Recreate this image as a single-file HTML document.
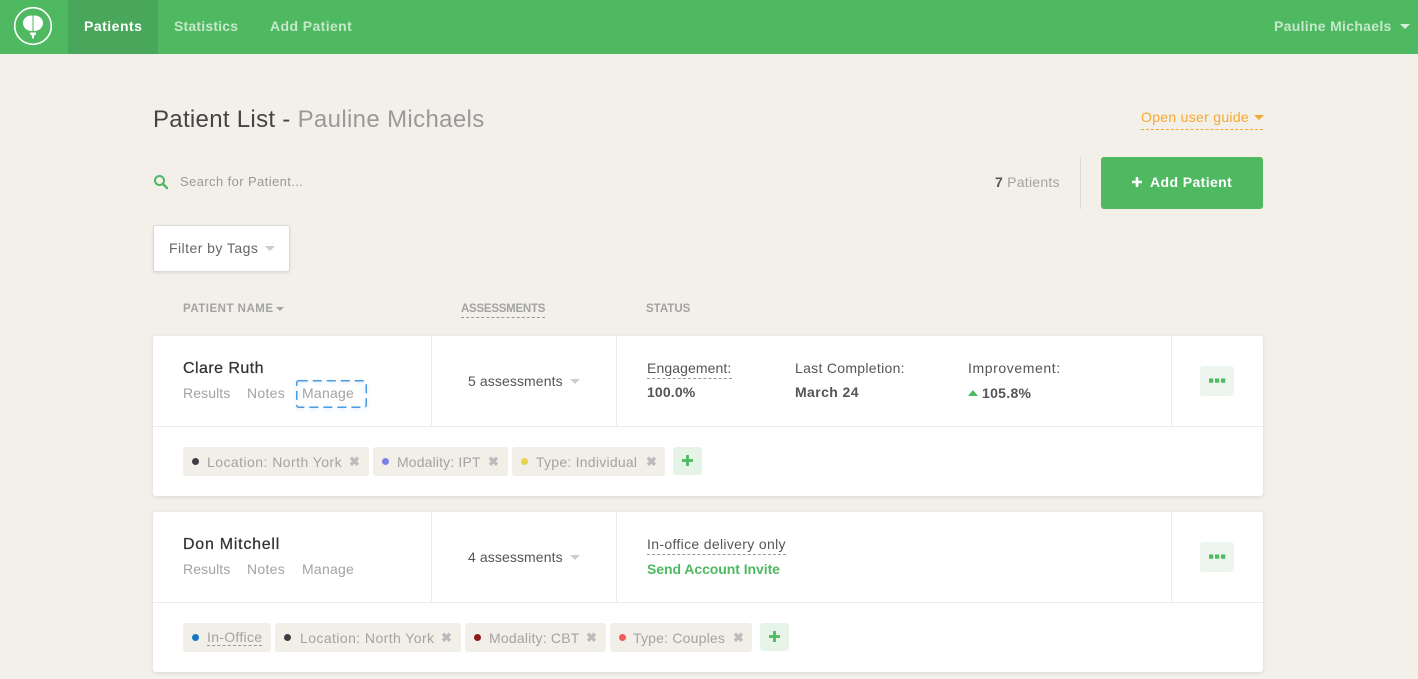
<!DOCTYPE html>
<html><head><meta charset="utf-8"><title>Patient List</title>
<style>
*{box-sizing:border-box}
html,body{margin:0;padding:0;width:1418px;height:679px;overflow:hidden;background:#f3f0ea;font-family:"Liberation Sans",sans-serif;color:#444}
.a{position:absolute}
.t{position:absolute;white-space:nowrap;line-height:20px;font-size:14px}
.b{font-weight:700}
.nav{left:0;top:0;width:1418px;height:54px;background:#4eb961}
.card{left:153px;width:1110px;height:160px;background:#fff;border-radius:3px;box-shadow:0 1px 4px rgba(0,0,0,.1)}
.h{height:1px;background:#eceae6}
.v{width:1px;background:#eceae6}
.g{color:#a3a3a3}
.tag{position:absolute;height:29px;background:#f2efe9;border-radius:3px}
.plus{position:absolute;width:29px;height:28px;background:#e6f4e8;border-radius:3px}
.dot{position:absolute;width:7px;height:7px;border-radius:50%}
.more{position:absolute;width:34px;height:30px;left:1200px;background:#edf6ee;border-radius:3px}
.tri{position:absolute;width:0;height:0;border-left:5px solid transparent;border-right:5px solid transparent;border-top:5px solid #ccc}
.dash{position:absolute;height:0;border-top:1px dashed #999}
.name{-webkit-text-stroke:.25px #333}
svg{position:absolute;overflow:visible}
</style></head><body>
<div class="a nav"></div>
<div class="a" style="left:68px;top:0;width:90px;height:54px;background:#48a75a"></div>
<svg style="left:0;top:0" width="70" height="54">
<circle cx="33" cy="26" r="18.3" fill="none" stroke="#fff" stroke-width="1.6"/>
<path d="M32.500 15.500C27 15 23 18.500 23 23C23 27.500 27 31.500 32.500 31ZM33.500 15.500C39 15 43 18.500 43 23C43 27.500 39 31.500 33.500 31Z" fill="#fff"/>
<path d="M30 32.500h6v1.500l-2 2v2.500h-2v-2.500l-2-2z" fill="#fff"/>
</svg>
<div class="t b" style="left:84px;top:16px;color:#fff;letter-spacing:.5px">Patients</div>
<div class="t b" style="left:174px;top:16px;color:#c5e8cb;letter-spacing:.2px">Statistics</div>
<div class="t b" style="left:270px;top:16px;color:#c5e8cb;letter-spacing:.4px">Add Patient</div>
<div class="t b" style="left:1274px;top:16px;color:#c5e8cb;letter-spacing:.3px">Pauline Michaels</div>
<div class="tri" style="left:1400px;top:24px;border-top-color:#d5eeda"></div>

<div class="t" style="left:153px;top:105px;line-height:30px;font-size:24px;color:#444;letter-spacing:.3px">Patient List - <span style="color:#999;letter-spacing:.35px">Pauline Michaels</span></div>
<div class="t" style="left:1141px;top:107px;color:#f5a833;letter-spacing:.3px">Open user guide</div>
<div class="tri" style="left:1254px;top:115px;border-top-color:#f5a833"></div>
<div class="dash" style="left:1141px;top:129px;width:122px;border-top-color:#f5a833"></div>

<svg style="left:154px;top:175px" width="15" height="14"><circle cx="5.500" cy="5.500" r="4.500" fill="none" stroke="#4eb961" stroke-width="2"/><path d="M9 9l4 4" stroke="#4eb961" stroke-width="2.400" stroke-linecap="round"/></svg>
<div class="t" style="left:180px;top:172px;font-size:13px;color:#999;letter-spacing:.4px">Search for Patient...</div>
<div class="t" style="left:995px;top:172px;color:#a3a3a3;letter-spacing:.25px"><span class="b" style="color:#555">7</span> Patients</div>
<div class="a v" style="left:1080px;top:157px;height:52px;background:#dddad4"></div>
<div class="a" style="left:1101px;top:157px;width:162px;height:52px;background:#4eb961;border-radius:3px"></div>
<svg style="left:1131px;top:176px" width="12" height="12"><path d="M6 1v10M1 6h10" stroke="#fff" stroke-width="2.600"/></svg>
<div class="t b" style="left:1150px;top:172px;color:#fff;letter-spacing:.4px">Add Patient</div>

<div class="a" style="left:153px;top:225px;width:137px;height:47px;background:#fff;border:1px solid #dcdad6;border-radius:3px;box-shadow:0 1px 3px rgba(0,0,0,.1)"></div>
<div class="t" style="left:169px;top:238px;color:#666;letter-spacing:.45px">Filter by Tags</div>
<div class="tri" style="left:265px;top:246px"></div>

<div class="t b" style="left:183px;top:299px;font-size:11.500px;color:#a3a3a3;letter-spacing:.5px">PATIENT NAME</div>
<div class="tri" style="left:276px;top:307px;border-left-width:4px;border-right-width:4px;border-top:4px solid #a3a3a3"></div>
<div class="t b" style="left:461px;top:299px;font-size:11.500px;color:#a3a3a3;letter-spacing:-.25px">ASSESSMENTS</div>
<div class="dash" style="left:461px;top:317px;width:84px"></div>
<div class="t b" style="left:646px;top:299px;font-size:11.500px;color:#a3a3a3;letter-spacing:0">STATUS</div>

<div class="a card" style="top:336px"></div>
<div class="a h" style="left:153px;top:426px;width:1110px"></div>
<div class="a v" style="left:431px;top:336px;height:90px"></div>
<div class="a v" style="left:616px;top:336px;height:90px"></div>
<div class="a v" style="left:1171px;top:336px;height:90px"></div>
<div class="t name" style="left:183px;top:359px;font-size:16px;color:#333;letter-spacing:.45px">Clare Ruth</div>
<div class="t g" style="left:183px;top:383px;letter-spacing:.1px">Results</div>
<div class="t g" style="left:247px;top:383px;letter-spacing:.3px">Notes</div>
<div class="t g" style="left:302px;top:383px;letter-spacing:.25px">Manage</div>
<svg style="left:296px;top:380px;filter:drop-shadow(0 1px 2px rgba(74,155,224,.35))" width="71" height="28"><rect x=".75" y=".75" width="69.500" height="26.500" rx="2" fill="none" stroke="#4a9be0" stroke-width="1.500" stroke-dasharray="9 5"/></svg>
<div class="t" style="left:468px;top:371px;color:#555;letter-spacing:.1px">5 assessments</div>
<div class="tri" style="left:570px;top:379px"></div>
<div class="t" style="left:647px;top:358px;color:#555;letter-spacing:.1px">Engagement:</div>
<div class="dash" style="left:647px;top:378px;width:85px"></div>
<div class="t b" style="left:647px;top:382px;color:#555;letter-spacing:.15px">100.0%</div>
<div class="t" style="left:795px;top:358px;color:#555;letter-spacing:.3px">Last Completion:</div>
<div class="t b" style="left:795px;top:382px;color:#555;letter-spacing:.4px">March 24</div>
<div class="t" style="left:968px;top:358px;color:#555;letter-spacing:.6px">Improvement:</div>
<div class="tri" style="left:968px;top:390px;border-top:0;border-bottom:6px solid #4eb961"></div>
<div class="t b" style="left:982px;top:383px;color:#555;letter-spacing:.3px">105.8%</div>
<div class="more" style="top:366px"></div>
<svg style="left:1209px;top:378px" width="16" height="6"><path d="M0 .5h4.300v4.300H0zM6 .5h4.300v4.300H6zM12 .5h4.300v4.300H12z" fill="#4eb961"/></svg>

<div class="tag" style="left:183px;top:447px;width:186px"></div>
<div class="dot" style="left:192px;top:458px;background:#3e3e42"></div>
<div class="t g" style="left:207px;top:452px;letter-spacing:.45px">Location: North York</div>
<div class="t b" style="left:349px;top:452px;color:#bbb;font-size:13px">✖</div>
<div class="tag" style="left:373px;top:447px;width:135px"></div>
<div class="dot" style="left:382px;top:458px;background:#7d7fe8"></div>
<div class="t g" style="left:397px;top:452px;letter-spacing:.15px">Modality: IPT</div>
<div class="t b" style="left:488px;top:452px;color:#bbb;font-size:13px">✖</div>
<div class="tag" style="left:512px;top:447px;width:153px"></div>
<div class="dot" style="left:521px;top:458px;background:#e8d24e"></div>
<div class="t g" style="left:536px;top:452px;letter-spacing:.25px">Type: Individual</div>
<div class="t b" style="left:646px;top:452px;color:#bbb;font-size:13px">✖</div>
<div class="plus" style="left:673px;top:447px"></div>
<svg style="left:682px;top:455px" width="11" height="11"><path d="M5.500 0v11M0 5.500h11" stroke="#4eb961" stroke-width="2.800"/></svg>

<div class="a card" style="top:512px"></div>
<div class="a h" style="left:153px;top:602px;width:1110px"></div>
<div class="a v" style="left:431px;top:512px;height:90px"></div>
<div class="a v" style="left:616px;top:512px;height:90px"></div>
<div class="a v" style="left:1171px;top:512px;height:90px"></div>
<div class="t name" style="left:183px;top:535px;font-size:16px;color:#333;letter-spacing:.75px">Don Mitchell</div>
<div class="t g" style="left:183px;top:559px;letter-spacing:.1px">Results</div>
<div class="t g" style="left:247px;top:559px;letter-spacing:.3px">Notes</div>
<div class="t g" style="left:302px;top:559px;letter-spacing:.25px">Manage</div>
<div class="t" style="left:468px;top:547px;color:#555;letter-spacing:.1px">4 assessments</div>
<div class="tri" style="left:570px;top:555px"></div>
<div class="t" style="left:647px;top:534px;color:#555;letter-spacing:.33px">In-office delivery only</div>
<div class="dash" style="left:647px;top:554px;width:139px"></div>
<div class="t b" style="left:647px;top:559px;color:#4eb961;letter-spacing:-.06px">Send Account Invite</div>
<div class="more" style="top:542px"></div>
<svg style="left:1209px;top:554px" width="16" height="6"><path d="M0 .5h4.300v4.300H0zM6 .5h4.300v4.300H6zM12 .5h4.300v4.300H12z" fill="#4eb961"/></svg>

<div class="tag" style="left:183px;top:623px;width:88px"></div>
<div class="dot" style="left:192px;top:634px;background:#1a75c7"></div>
<div class="t g" style="left:207px;top:627px;letter-spacing:.3px">In-Office</div>
<div class="dash" style="left:207px;top:645px;width:55px"></div>
<div class="tag" style="left:275px;top:623px;width:186px"></div>
<div class="dot" style="left:284px;top:634px;background:#3e3e42"></div>
<div class="t g" style="left:300px;top:628px;letter-spacing:.42px">Location: North York</div>
<div class="t b" style="left:441px;top:628px;color:#bbb;font-size:13px">✖</div>
<div class="tag" style="left:465px;top:623px;width:141px"></div>
<div class="dot" style="left:474px;top:634px;background:#8e1a1a"></div>
<div class="t g" style="left:489px;top:628px;letter-spacing:.2px">Modality: CBT</div>
<div class="t b" style="left:586px;top:628px;color:#bbb;font-size:13px">✖</div>
<div class="tag" style="left:610px;top:623px;width:142px"></div>
<div class="dot" style="left:619px;top:634px;background:#f05a5a"></div>
<div class="t g" style="left:633px;top:628px;letter-spacing:.2px">Type: Couples</div>
<div class="t b" style="left:733px;top:628px;color:#bbb;font-size:13px">✖</div>
<div class="plus" style="left:760px;top:623px"></div>
<svg style="left:769px;top:631px" width="11" height="11"><path d="M5.500 0v11M0 5.500h11" stroke="#4eb961" stroke-width="2.800"/></svg>
</body></html>
